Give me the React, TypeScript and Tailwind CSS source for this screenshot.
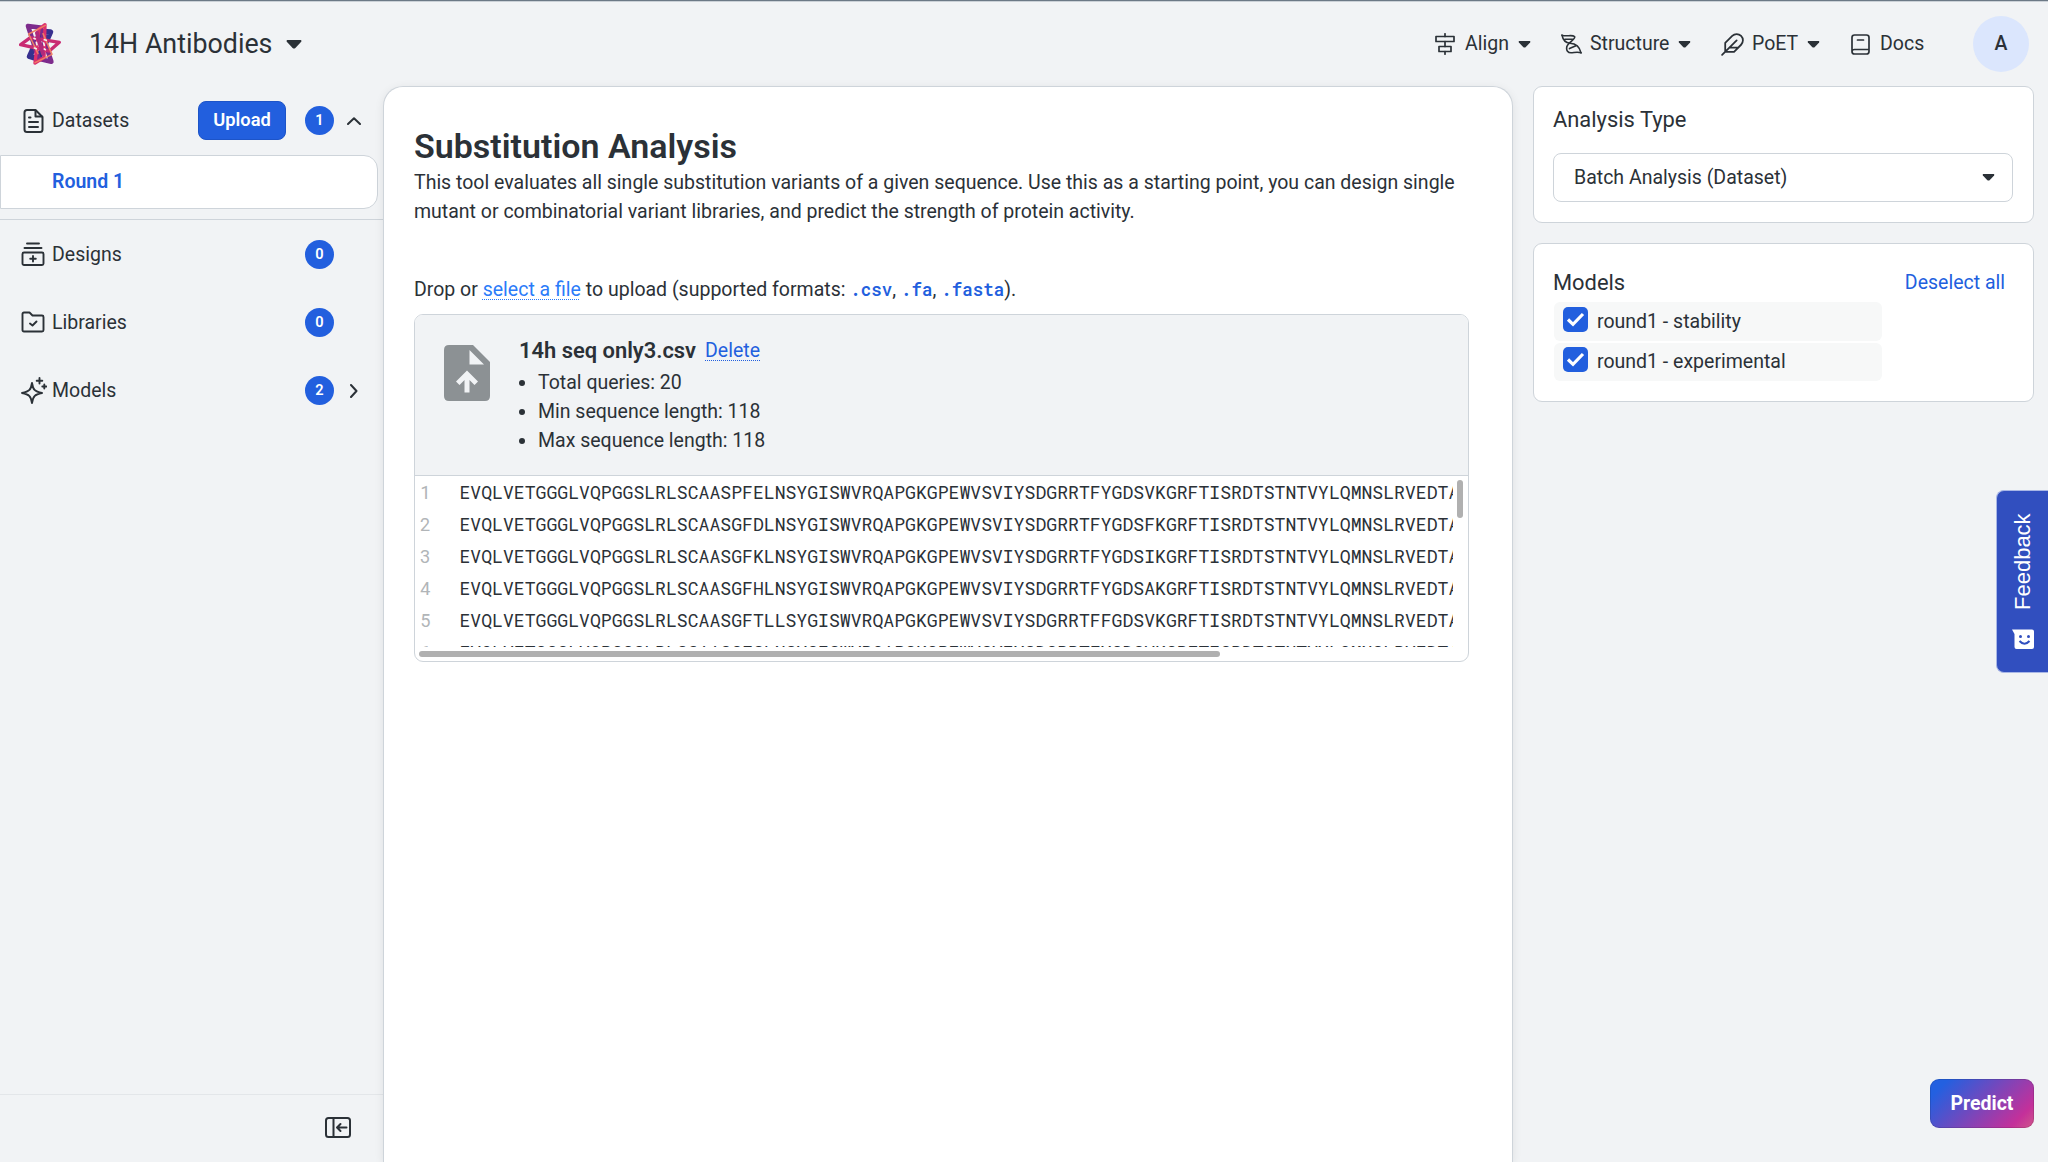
import React from "react";

const sequences = [
  "EVQLVETGGGLVQPGGSLRLSCAASPFELNSYGISWVRQAPGKGPEWVSVIYSDGRRTFYGDSVKGRFTISRDTSTNTVYLQMNSLRVEDTAVYYCAR",
  "EVQLVETGGGLVQPGGSLRLSCAASGFDLNSYGISWVRQAPGKGPEWVSVIYSDGRRTFYGDSFKGRFTISRDTSTNTVYLQMNSLRVEDTAVYYCAR",
  "EVQLVETGGGLVQPGGSLRLSCAASGFKLNSYGISWVRQAPGKGPEWVSVIYSDGRRTFYGDSIKGRFTISRDTSTNTVYLQMNSLRVEDTAVYYCAR",
  "EVQLVETGGGLVQPGGSLRLSCAASGFHLNSYGISWVRQAPGKGPEWVSVIYSDGRRTFYGDSAKGRFTISRDTSTNTVYLQMNSLRVEDTAVYYCAR",
  "EVQLVETGGGLVQPGGSLRLSCAASGFTLLSYGISWVRQAPGKGPEWVSVIYSDGRRTFFGDSVKGRFTISRDTSTNTVYLQMNSLRVEDTAVYYCAR",
  "EVQLVETGGGLVQPGGSLRLSCAASGFSLNSYGISWVRQAPGKGPEWVSVIYSDGRRTFYGDSVKGRFTISRDTSTNTVYLQMNSLRVEDTAVYYCAR",
];

function Stroke({ className, box = "0 0 24 24", width = 1.8, children }: { className: string; box?: string; width?: number; children: React.ReactNode }) {
  return (
    <svg className={className} viewBox={box} fill="none" stroke="currentColor" strokeWidth={width} strokeLinecap="round" strokeLinejoin="round">
      {children}
    </svg>
  );
}

function Caret({ className }: { className: string }) {
  return (
    <svg className={className} viewBox="0 0 16 9" fill="currentColor">
      <path d="M1.2 0H14.8Q16 .6 15.2 1.8L9.4 8Q8 9 6.6 8L.8 1.8Q0 .6 1.2 0Z" />
    </svg>
  );
}

function Logo() {
  return (
    <svg className="h-[42px] w-[42px]" viewBox="58 68 126 126" fill="none" strokeLinejoin="round" strokeLinecap="round">
      <path d="M152 95L124 93L90 168L116 176Z" stroke="#37308f" strokeWidth="17" />
      <path d="M85 77L122 82L155 184L117 175Z" stroke="#7d2b8c" strokeWidth="14" />
      <path d="M63 133L92 112L179 126L149 152Z" stroke="#c92b72" strokeWidth="10" />
      <path d="M136 73L118 86L106 188L133 172Z" stroke="#dc2f6d" strokeWidth="10" />
      <path d="M112 98L130 160" stroke="#b02a7c" strokeWidth="12" />
      <path d="M137 75L87 101L115 160" stroke="#ee7f64" strokeWidth="4.500" />
      <path d="M106 187L157 162L130 100" stroke="#ee7f64" strokeWidth="4.500" />
      <path d="M103 114l4 2M134 118l6 2M104 143l6 2M134 146l3 2M110 126l2 7M132 128l2 7" stroke="#f1f3f5" strokeWidth="5" />
    </svg>
  );
}

function Badge({ value }: { value: number }) {
  return (
    <span className="flex h-[29px] w-[29px] items-center justify-center rounded-full bg-[#225fde] text-[14.6px] font-semibold leading-none text-white">
      {value}
    </span>
  );
}

function NavRow({ icon, label, action, count, trailing, className }: { icon: React.ReactNode; label: string; action?: React.ReactNode; count: number; trailing?: React.ReactNode; className: string }) {
  return (
    <div className={`flex items-center pl-[20px] ${className}`}>
      <span className="flex w-[28px] justify-center">{icon}</span>
      <span className="ml-[4px] flex-1">{label}</span>
      {action}
      <Badge value={count} />
      <span className="flex w-[49px] justify-start">{trailing}</span>
    </div>
  );
}

function Sidebar() {
  return (
    <aside className="flex w-[383px] shrink-0 flex-col">
      <NavRow
        className="h-[69px]"
        label="Datasets"
        count={1}
        icon={
          <Stroke className="mr-[2px] h-[24px] w-[21px]" box="0 0 21 24" width={2}>
            <path d="M4 1H12.5L19.5 8V20.500Q19.500 23 17 23H4Q1.500 23 1.500 20.500V3.500Q1.500 1 4 1Z" />
            <path d="M12.500 1.500V7.500H19M6 8.500H7.500M6 13H15M6 18H15" />
          </Stroke>
        }
        action={
          <button className="mr-[19px] h-[39px] w-[88px] rounded-[8px] border border-[#1d54c8] bg-[#225fde] text-[18.300px] font-semibold leading-none text-white">
            Upload
          </button>
        }
        trailing={
          <Stroke className="ml-[13px] h-[8px] w-[14px]" box="0 0 14 8" width={2}>
            <path d="M1 7L7 1.300L13 7" />
          </Stroke>
        }
      />
      <div className="flex h-[54px] w-[378px] items-center rounded-r-[14px] border border-[#ced4da] bg-white pl-[51px] font-semibold text-[#225fde]">
        Round 1
      </div>
      <div className="mt-[10px] border-t border-[#ced4da]" />
      <NavRow
        className="h-[68.300px]"
        label="Designs"
        count={0}
        icon={
          <Stroke className="mr-[2px] h-[24px] w-[24px]" width={1.9}>
            <path d="M6 1.500H18M3.500 6H20.500" />
            <rect x="1.500" y="10.500" width="21" height="12.500" rx="1.500" />
            <path d="M12 14V19.500M9.200 16.800H14.800" />
          </Stroke>
        }
      />
      <NavRow
        className="h-[68.300px]"
        label="Libraries"
        count={0}
        icon={
          <Stroke className="mr-[2px] h-[22px] w-[24px]" box="0 0 24 22" width={1.9}>
            <path d="M1.500 3Q1.500 1.500 3 1.500H8.500L11.500 4.500H21Q22.500 4.500 22.500 6V19Q22.500 20.500 21 20.500H3Q1.500 20.500 1.500 19Z" />
            <path d="M9 12.500L11.500 14.500L15.500 10.500" />
          </Stroke>
        }
      />
      <NavRow
        className="h-[68.300px]"
        label="Models"
        count={2}
        icon={
          <Stroke className="mr-[1px] h-[27px] w-[26px]" box="0 0 26 27" width={1.9}>
            <path d="M11 6C12 12.500 13.500 14.500 21 16C13.500 17.500 12 19.500 11 26C10 19.500 8.500 17.500 1 16C8.500 14.500 10 12.500 11 6Z" />
            <path d="M18.500 1V6.500M15.700 3.800H21.300M23.300 7.500V11.500M21.300 9.500H25.300" />
          </Stroke>
        }
        trailing={
          <Stroke className="ml-[16px] h-[14px] w-[8px]" box="0 0 8 14" width={2}>
            <path d="M1 1L6.500 7L1 13" />
          </Stroke>
        }
      />
      <div className="flex-1" />
      <div className="flex h-[68px] items-center justify-end border-t border-[#e3e6e9] pb-[2px] pr-[32px]">
        <Stroke className="h-[21px] w-[26px]" box="0 0 26 21" width={2}>
          <rect x="1" y="1" width="24" height="19" rx="2.500" />
          <path d="M8.500 1V20M21.500 10.500H13M15.500 7L12 10.500L15.500 14" />
        </Stroke>
      </div>
    </aside>
  );
}

function Header() {
  return (
    <header className="flex h-[84px] shrink-0 items-center">
      <div className="ml-[19px]">
        <Logo />
      </div>
      <span className="ml-[28px] text-[26.800px] leading-none">14H Antibodies</span>
      <Caret className="ml-[14px] h-[9px] w-[16px]" />
      <nav className="ml-auto flex items-center leading-none">
        <div className="flex w-[126px] items-center">
          <Stroke className="mr-[10px] h-[22px] w-[20px]" box="0 0 20 22" width={1.7}>
            <rect x="1" y="3.500" width="18" height="5" />
            <rect x="4" y="13.500" width="12" height="5" />
            <path d="M10 .8V3.500M10 8.500V13.500M10 18.500V21.200" />
          </Stroke>
          Align
          <Caret className="ml-[9px] h-[7px] w-[13px]" />
        </div>
        <div className="flex w-[159px] items-center">
          <Stroke className="mr-[8px] h-[20px] w-[21px]" box="0 0 21 20" width={1.6}>
            <path d="M1 1.200C5 3 11 .2 13.500 2.500C15.500 5 6.500 8.500 5.800 13C5 16.500 7 18.800 10 18.800C13 18.800 16 17.300 20 18.800" />
            <path d="M1 1.200C2 6.500 4.500 9 9 9.200C14.500 9.500 18.500 12 20 18.800M4 5.200H11.500M8.500 14.600L15.500 11.500" />
          </Stroke>
          Structure
          <Caret className="ml-[9px] h-[7px] w-[13px]" />
        </div>
        <div className="flex w-[131px] items-center">
          <Stroke className="mr-[7px] h-[25px] w-[25px]" width={1.7}>
            <path d="M20.240 12.240a6 6 0 0 0-8.490-8.490L5 10.500V19h8.500ZM16 8L2 22M17.500 15H9" />
          </Stroke>
          PoET
          <Caret className="ml-[9px] h-[7px] w-[13px]" />
        </div>
        <div className="flex w-[122px] items-center">
          <Stroke className="mr-[10px] h-[21px] w-[19px]" box="0 0 19 21" width={1.7}>
            <path d="M18 15.500V3.500Q18 1 15.500 1H3.500Q1 1 1 3.500V17.500Q1 20 3.500 20H15.500Q18 20 18 17.500V15.500H3.500Q1 15.500 1 17.500M6.500 6H12.500" />
          </Stroke>
          Docs
        </div>
        <div className="mr-[19px] flex h-[56px] w-[56px] items-center justify-center rounded-full bg-[#dbe6fd] font-medium">A</div>
      </nav>
    </header>
  );
}

function FilePanel() {
  return (
    <section className="mt-[10px] h-[348px] w-[1055px] overflow-hidden rounded-[9px] border border-[#ced4da] bg-white">
      <div className="flex h-[161px] border-b border-[#ced4da] bg-[#f1f3f5] pl-[29px] pt-[20px]">
        <svg className="mt-[10px] h-[56px] w-[46px]" viewBox="0 0 46 56" fill="#8c9194">
          <path fillRule="evenodd" d="M5 0H29L46 17V51Q46 56 41 56H5Q0 56 0 51V5Q0 0 5 0ZM25.500 5V19.500H40ZM23 25.500L12 36.500L15.500 40L20.500 35V47.500H25.500V35L30.500 40L34 36.500Z" />
        </svg>
        <div className="ml-[29px]">
          <div className="flex items-center gap-[9px] leading-[31px]">
            <span className="text-[21.900px] font-semibold">14h seq only3.csv</span>
            <a className="text-[#225fde] underline decoration-dotted decoration-1 underline-offset-[3px]">Delete</a>
          </div>
          <ul className="mt-[2px] list-disc pl-[19px]">
            <li>Total queries: 20</li>
            <li>Min sequence length: 118</li>
            <li>Max sequence length: 118</li>
          </ul>
        </div>
      </div>
      <div className="flex h-[171px]">
        <div className="flex w-[1038px] flex-col overflow-hidden">
          {sequences.map((sequence, index) => (
            <div key={sequence} className="flex h-[32px] shrink-0 items-center whitespace-nowrap font-['Roboto_Mono','Noto_Sans_Mono','DejaVu_Sans_Mono',monospace] text-[18.130px] leading-[32px]">
              <span className="w-[44.500px] shrink-0 pl-[5px] text-[#b1b5b8]">{index + 1}</span>
              <span className="text-[#2b3137]">{sequence}</span>
            </div>
          ))}
        </div>
        <div className="ml-[4px] mt-[4px] h-[38px] w-[6px] rounded-full bg-[#b0b0b0]" />
      </div>
      <div className="ml-[4px] mt-[4px] h-[6px] w-[801px] rounded-full bg-[#b0b0b0]" />
    </section>
  );
}

function Code({ children }: { children: React.ReactNode }) {
  return <code className="font-['Roboto_Mono','Noto_Sans_Mono','DejaVu_Sans_Mono',monospace] text-[17.500px] font-semibold text-[#225fde]">{children}</code>;
}

function MainPanel() {
  return (
    <main className="w-[1130px] shrink-0 rounded-t-[20px] border border-b-0 border-[#ced4da] bg-white pl-[30px] pt-[38px] shadow-[0_2px_10px_rgba(0,0,0,0.08)]">
      <h1 className="text-[34px] font-semibold leading-[43px]">Substitution Analysis</h1>
      <p className="w-[1060px]">
        This tool evaluates all single substitution variants of a given sequence. Use this as a starting point, you can design single
        <br />
        mutant or combinatorial variant libraries, and predict the strength of protein activity.
      </p>
      <p className="mt-[48px]">
        Drop or <a className="text-[#2a7bf9] underline decoration-dotted decoration-1 underline-offset-[3px]">select a file</a> to upload (supported formats: <Code>.csv</Code>, <Code>.fa</Code>, <Code>.fasta</Code>).
      </p>
      <FilePanel />
    </main>
  );
}

function ModelOption({ label }: { label: string }) {
  return (
    <label className="mb-[2px] ml-px flex h-[38.500px] w-[328px] items-center rounded-[6px] bg-[#f7f8f8] pl-[9px]">
      <span className="mb-[4px] flex h-[25px] w-[25px] items-center justify-center rounded-[5px] bg-[#225fde]">
        <svg className="h-[15px] w-[19px]" viewBox="0 0 19 15" fill="none" stroke="#fff" strokeWidth="3.200">
          <path d="M2 7.500L7 12.300L17 2" />
        </svg>
      </span>
      <span className="ml-[9px]">{label}</span>
    </label>
  );
}

function SettingsPanel() {
  return (
    <aside className="ml-[20px] flex w-[501px] flex-col gap-[20px]">
      <section className="h-[137px] rounded-[9px] border border-[#ced4da] bg-white pl-[19px] pr-[20px] pt-[16px]">
        <h2 className="text-[21.900px] leading-[33px]">Analysis Type</h2>
        <div className="mt-[17px] flex h-[49px] items-center justify-between rounded-[8px] border border-[#ced4da] pl-[20px] pr-[17px]">
          <span>Batch Analysis (Dataset)</span>
          <Caret className="h-[7px] w-[13px]" />
        </div>
      </section>
      <section className="h-[159px] rounded-[9px] border border-[#ced4da] bg-white pl-[19px] pr-[20px] pt-[22px]">
        <div className="mb-[3px] flex h-[33px] items-center justify-between pr-[8px]">
          <h2 className="text-[21.900px]">Models</h2>
          <a className="text-[#225fde]">Deselect all</a>
        </div>
        <ModelOption label="round1 - stability" />
        <ModelOption label="round1 - experimental" />
      </section>
    </aside>
  );
}

export default function App() {
  return (
    <div className="relative flex h-[1162px] w-[2048px] flex-col overflow-hidden bg-[#f1f3f5] font-['Roboto',sans-serif] text-[19.500px] leading-[29.250px] text-[#2b3137]">
      <div className="h-[2px] shrink-0 border-t border-[#6c7986] bg-[#cbd1d7]" />
      <Header />
      <div className="flex min-h-0 flex-1">
        <Sidebar />
        <MainPanel />
        <SettingsPanel />
      </div>
      <button className="absolute right-0 top-[490px] flex h-[183px] w-[52px] flex-col items-center rounded-l-[8px] border border-r-0 border-[#a9b7e6] bg-[#314fbf] pt-[22px] text-white">
        <span className="h-[98px] rotate-180 font-['Liberation_Sans',sans-serif] text-[22px] leading-[26px] [writing-mode:vertical-rl]">Feedback</span>
        <svg className="mt-[18px] h-[21px] w-[22px]" viewBox="0 0 22 21">
          <path d="M0 .5H20Q22 .5 22 2.500V18Q22 20 20 20H4.500Q2.500 20 2.500 18V5Z" fill="#fff" />
          <circle cx="8.500" cy="7.500" r="1.500" fill="#314fbf" />
          <circle cx="16.500" cy="7.500" r="1.500" fill="#314fbf" />
          <path d="M7.500 12Q12.500 17.500 17.500 12" fill="none" stroke="#314fbf" strokeWidth="2" />
        </svg>
      </button>
      <button className="absolute bottom-[34px] right-[14px] h-[49px] w-[104px] rounded-[9px] bg-[linear-gradient(135deg,#2360e0_12%,#c4309a_84%,#d0578a_100%)] font-bold text-white shadow-[inset_0_0_0_1px_rgba(0,0,0,0.12)]">
        Predict
      </button>
    </div>
  );
}
